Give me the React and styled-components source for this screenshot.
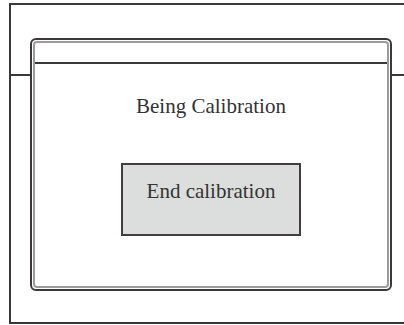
import React from "react";
import styled, { createGlobalStyle } from "styled-components";

const Global = createGlobalStyle`
  html, body { margin: 0; padding: 0; background: #ffffff; overflow: hidden; }
  body { font-family: "Liberation Serif", "Times New Roman", serif; }
  * { box-sizing: border-box; }
`;

const Page = styled.div`
  position: relative;
  width: 404px;
  height: 325px;
  overflow: hidden;
  padding: 3px 0 0 9px;
`;

const Screen = styled.div`
  width: 420px;
  height: 321px;
  border: 2px solid #3a3838;
  display: flex;
  flex-direction: column;
`;

const ScreenHeader = styled.div`
  height: 71px;
  border-bottom: 2px solid #3a3838;
`;

const Dialog = styled.div`
  position: absolute;
  left: 30px;
  top: 38px;
  width: 362px;
  height: 253px;
  background: #ffffff;
  border: 2px solid #3d3838;
  border-radius: 6px;
  padding: 1px;
  display: flex;
`;

const DialogInner = styled.div`
  flex: 1;
  border: 2px solid #9c9a9a;
  border-radius: 4px;
  display: flex;
  flex-direction: column;
`;

const TitleBar = styled.div`
  height: 21px;
  border-bottom: 2px solid #3d3838;
`;

const Body = styled.div`
  flex: 1;
  display: flex;
  flex-direction: column;
  align-items: center;
  padding-top: 30px;
`;

const Message = styled.div`
  font-size: 21px;
  line-height: 24px;
  color: #333333;
`;

const Button = styled.button`
  margin-top: 45px;
  width: 180px;
  height: 73px;
  border: 2px solid #453d3d;
  border-radius: 0;
  background: #dcdddd;
  font-family: "Liberation Serif", "Times New Roman", serif;
  font-size: 21px;
  line-height: 24px;
  color: #333333;
  display: flex;
  justify-content: center;
  align-items: flex-start;
  padding: 14px 0 0;
`;

export default function App() {
  return (
    <>
      <Global />
      <Page>
        <Screen>
          <ScreenHeader />
        </Screen>
        <Dialog>
          <DialogInner>
            <TitleBar />
            <Body>
              <Message>Being Calibration</Message>
              <Button>End calibration</Button>
            </Body>
          </DialogInner>
        </Dialog>
      </Page>
    </>
  );
}
